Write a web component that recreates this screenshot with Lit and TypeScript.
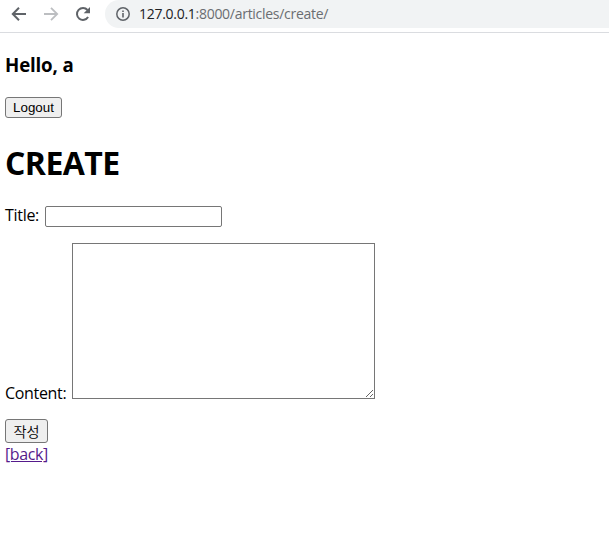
import { LitElement, html, css } from "lit";
import { customElement } from "lit/decorators.js";

@customElement("browser-bar")
class BrowserBar extends LitElement {
  static styles = css`
    :host {
      display: flex;
      box-sizing: border-box;
      height: 33px;
      border-bottom: 1px solid #dadce0;
      background: #fff;
    }
    .nav {
      display: flex;
      gap: 16px;
      padding: 6px 14px 0 11px;
      flex: none;
    }
    .nav svg, .info {
      width: 16px;
      height: 16px;
      display: block;
      flex: none;
    }
    .address {
      flex: 1;
      height: 28px;
      box-sizing: border-box;
      display: flex;
      align-items: center;
      gap: 8px;
      padding-left: 10px;
      border-radius: 14px 0 0 14px;
      background: #f1f3f4;
      font: 14px/28px "Open Sans", "Noto Sans", sans-serif;
      color: #6a6d71;
      white-space: nowrap;
    }
    .url { letter-spacing: -0.28px; }
    .host { color: #202124; }
  `;
  render() {
    return html`
      <div class="nav">
        <svg viewBox="0 0 16 16" fill="none" stroke="#5f6368" stroke-width="2"><path d="M15 8H2.5M8 1.8 1.8 8 8 14.2" /></svg>
        <svg viewBox="0 0 16 16" fill="none" stroke="#bcbec1" stroke-width="1.8"><path d="M1 8h12.5M8 1.8 14.2 8 8 14.2" /></svg>
        <svg viewBox="0 0 16 16"><path d="M13.1 11.1A6 6 0 1 1 12.5 4" fill="none" stroke="#5f6368" stroke-width="2" /><path d="M15 1v6.3H8.7z" fill="#5f6368" /></svg>
      </div>
      <div class="address">
        <svg class="info" viewBox="0 0 16 16"><circle cx="8" cy="8" r="6.2" fill="none" stroke="#5f6368" stroke-width="1.5" /><path d="M7.2 7h1.6v4.4H7.2zM7.2 4.5h1.6v1.6H7.2z" fill="#5f6368" /></svg>
        <span class="url"><span class="host">127.0.0.1</span>:8000/articles/create/</span>
      </div>
    `;
  }
}

@customElement("app-root")
class AppRoot extends LitElement {
  static styles = css`
    :host {
      display: block;
      height: 543px;
      overflow: hidden;
      background: #fff;
      color: #000;
      font: 400 16px/21px "Open Sans", "Noto Sans", "Noto Sans CJK KR", sans-serif;
    }
    main { padding: 19px 5px 0; }
    h3 {
      margin: 0 0 20px;
      font-size: 18.7px;
      line-height: 25px;
      font-weight: 700;
      letter-spacing: -0.16px;
    }
    h1 {
      margin: 23px 0 22px;
      font-size: 32px;
      line-height: 43px;
      font-weight: 700;
      letter-spacing: -0.55px;
    }
    button {
      display: block;
      box-sizing: border-box;
      margin: 0;
      padding: 0;
      border: 1px solid #767676;
      border-radius: 3px;
      background: #efefef;
      color: #000;
      text-align: center;
    }
    .logout {
      width: 57px;
      height: 21px;
      font: 13.33px/18px "Liberation Sans", Arial, sans-serif;
    }
    .submit {
      width: 43px;
      height: 24px;
      font: 350 14.2px/22px "Noto Sans CJK KR", sans-serif;
    }
    .row { display: flex; margin-bottom: 16px; }
    .title { gap: 6px; }
    .title label { width: 34px; margin-top: -1px; letter-spacing: -0.3px; }
    .content { gap: 6px; align-items: flex-end; margin-bottom: 20px; }
    .content label { width: 61px; margin-bottom: -5px; letter-spacing: -0.33px; }
    label { white-space: nowrap; flex: none; }
    input, textarea {
      display: block;
      box-sizing: border-box;
      margin: 0;
      border: 1px solid #767676;
      background: #fff;
      border-radius: 2px;
    }
    input { width: 177px; height: 21px; }
    textarea { width: 303px; height: 156px; border-radius: 0; resize: both; }
    a {
      display: inline-block;
      color: #551a8b;
      text-decoration: underline;
      text-decoration-thickness: 1px;
      line-height: 22px;
      letter-spacing: -0.42px;
    }
  `;
  render() {
    return html`
      <browser-bar></browser-bar>
      <main>
        <h3>Hello, a</h3>
        <button class="logout">Logout</button>
        <h1>CREATE</h1>
        <div class="row title"><label for="title">Title:</label><input id="title" type="text" /></div>
        <div class="row content"><label for="content">Content:</label><textarea id="content"></textarea></div>
        <button class="submit">작성</button>
        <a href="#">[back]</a>
      </main>
    `;
  }
}
